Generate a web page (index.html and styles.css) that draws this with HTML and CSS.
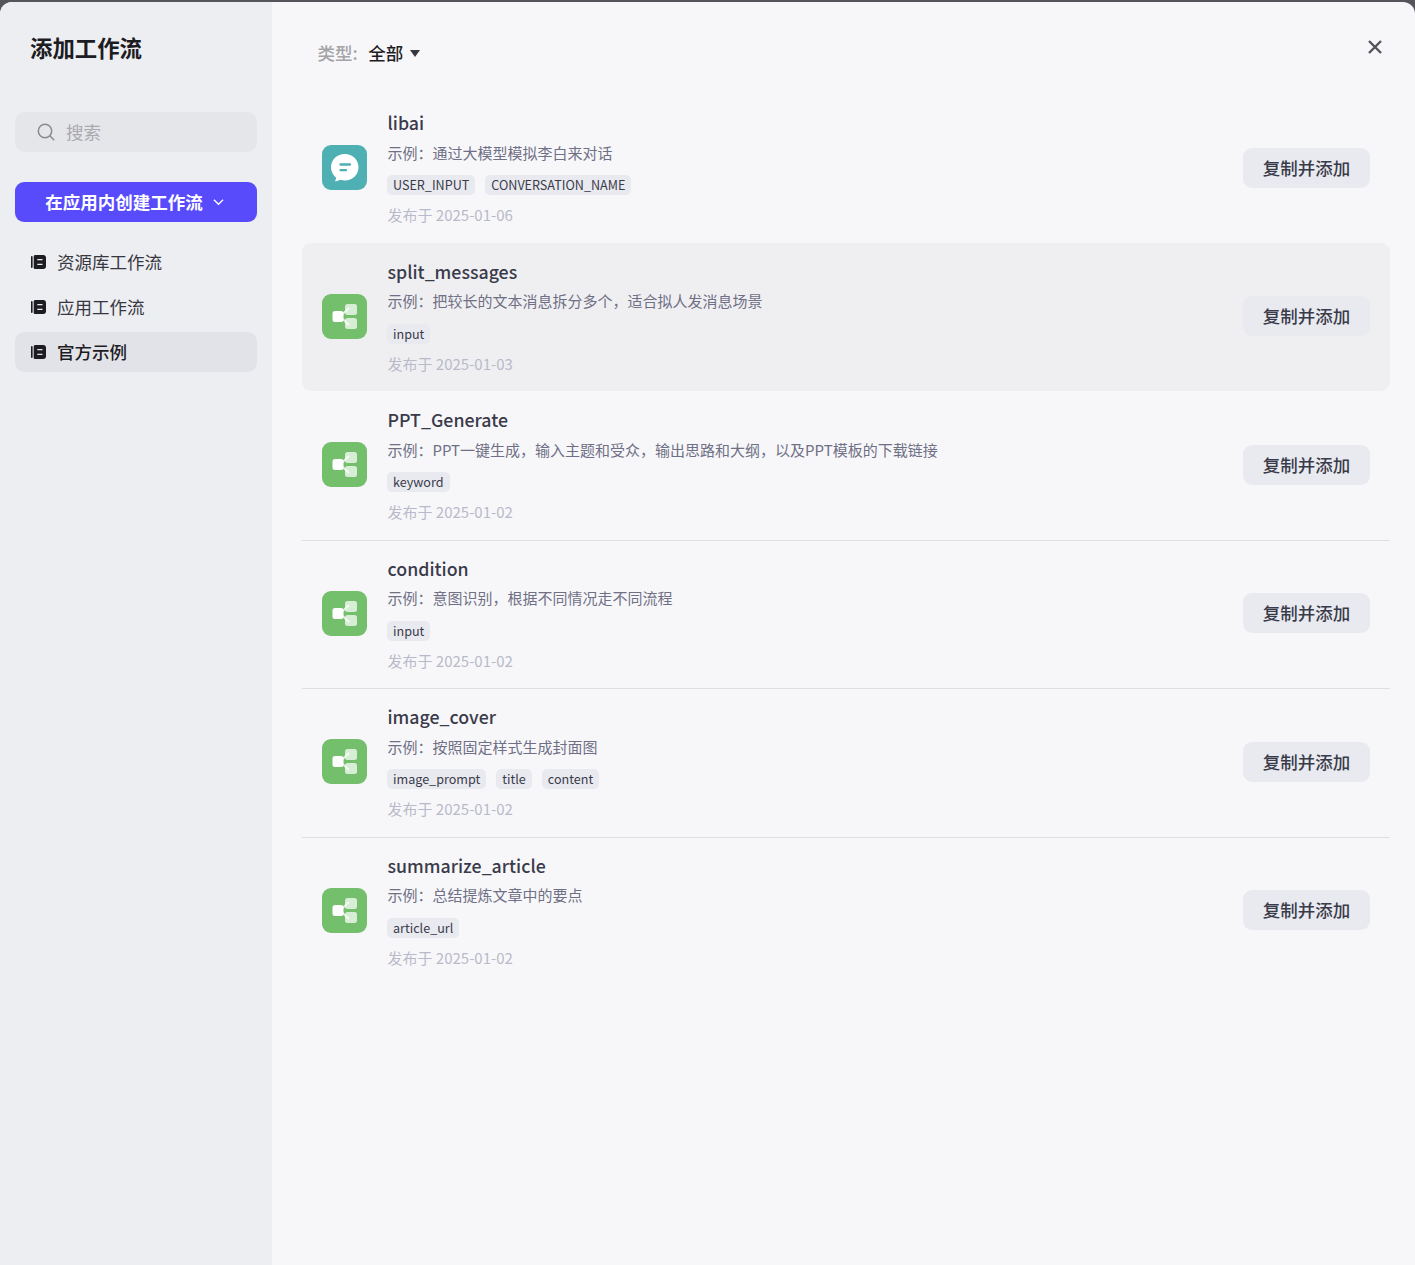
FILE: index.html
```html
<!DOCTYPE html>
<html lang="zh-CN">
<head>
<meta charset="utf-8">
<title>添加工作流</title>
<link rel="stylesheet" href="styles.css">
</head>
<body>
<svg class="defs" width="0" height="0" aria-hidden="true">
  <symbol id="book" viewBox="0 0 16 16">
    <path fill="currentColor" d="M1 2.800c0-.5.4-.8.8-.8s.8.3.8.8v10.400c0 .5-.4.8-.8.8s-.8-.3-.8-.8z"/>
    <path fill="currentColor" fill-rule="evenodd" d="M5.400 1h8C14.900 1 16 2.100 16 3.500v9c0 1.400-1.100 2.500-2.600 2.500h-8C4.400 15 3.700 14.300 3.700 13.400V2.600C3.700 1.700 4.400 1 5.400 1zM7.300 4.900v1.300h5.200V4.900zm0 4.900v1.300h5.200V9.800z"/>
  </symbol>
  <symbol id="flow" viewBox="0 0 45 45">
    <rect width="45" height="45" rx="9" fill="#74bf6c"/>
    <path d="M18 22.500 L27 14 M18 22.500 L27 31" stroke="#fff" stroke-opacity=".75" stroke-width="2" fill="none"/>
    <rect x="23" y="10" width="12" height="11" rx="2.500" fill="#fff" fill-opacity=".72"/>
    <rect x="23" y="24" width="12" height="11" rx="2.500" fill="#fff" fill-opacity=".72"/>
    <rect x="10.500" y="17" width="11" height="11" rx="2.500" fill="#fff"/>
  </symbol>
  <symbol id="chat" viewBox="0 0 45 45">
    <rect width="45" height="45" rx="9" fill="#4fb0b3"/>
    <path fill="#fff" d="M22.800 9C30.500 9 36.500 14.800 36.500 22.200S30.500 35.500 22.800 35.500c-1.500 0-3-.2-4.400-.7-1.500.9-3.500 1.500-5.600 1.500.8-1 1.300-2.300 1.300-3.500C11.300 30.400 9 26.600 9 22.200 9 14.800 15.100 9 22.800 9z"/>
    <path stroke="#4fb0b3" stroke-width="2.300" stroke-linecap="round" d="M18.500 19.500h9.500M18.500 25.200h5.500"/>
  </symbol>
</svg>
<div class="modal">
  <aside class="sidebar">
    <h1 class="side-title">添加工作流</h1>
    <div class="search">
      <svg class="search-icon" viewBox="0 0 18 18" width="18" height="18"><circle cx="8" cy="8" r="6.700" fill="none" stroke="currentColor" stroke-width="1.500"/><path d="M13 13l3.800 3.800" stroke="currentColor" stroke-width="1.500" stroke-linecap="round"/></svg>
      <span class="lift">搜索</span>
    </div>
    <button class="create-btn">在应用内创建工作流
      <svg class="chev" viewBox="0 0 12 8" width="11" height="8"><path d="M1 1.500l5 5 5-5" fill="none" stroke="currentColor" stroke-width="1.400"/></svg>
    </button>
    <nav class="nav">
      <a class="nav-item"><svg class="book"><use href="#book"/></svg><span class="lift">资源库工作流</span></a>
      <a class="nav-item"><svg class="book"><use href="#book"/></svg><span class="lift">应用工作流</span></a>
      <a class="nav-item active"><svg class="book"><use href="#book"/></svg><span class="lift">官方示例</span></a>
    </nav>
  </aside>
  <main class="main">
    <header class="filter">
      <span class="filter-label">类型:</span>
      <span class="filter-value">全部</span>
      <svg class="caret" viewBox="0 0 10 7" width="10" height="7"><path d="M0 0h10L5 7z" fill="currentColor"/></svg>
      <svg class="close" viewBox="0 0 14 14" width="14" height="14"><path d="M1 1l12 12M13 1L1 13" stroke="currentColor" stroke-width="2.400"/></svg>
    </header>
    <section class="list">
      <article class="row">
        <svg class="app-icon"><use href="#chat"/></svg>
        <div class="info">
          <div class="name">libai</div>
          <div class="desc">示例：通过大模型模拟李白来对话</div>
          <div class="tags"><span class="tag">USER_INPUT</span><span class="tag">CONVERSATION_NAME</span></div>
          <div class="date">发布于 2025-01-06</div>
        </div>
        <button class="add-btn">复制并添加</button>
      </article>
      <article class="row hover">
        <svg class="app-icon"><use href="#flow"/></svg>
        <div class="info">
          <div class="name">split_messages</div>
          <div class="desc">示例：把较长的文本消息拆分多个，适合拟人发消息场景</div>
          <div class="tags"><span class="tag">input</span></div>
          <div class="date">发布于 2025-01-03</div>
        </div>
        <button class="add-btn">复制并添加</button>
      </article>
      <article class="row line">
        <svg class="app-icon"><use href="#flow"/></svg>
        <div class="info">
          <div class="name">PPT_Generate</div>
          <div class="desc">示例：PPT一键生成，输入主题和受众，输出思路和大纲，以及PPT模板的下载链接</div>
          <div class="tags"><span class="tag">keyword</span></div>
          <div class="date">发布于 2025-01-02</div>
        </div>
        <button class="add-btn">复制并添加</button>
      </article>
      <article class="row line">
        <svg class="app-icon"><use href="#flow"/></svg>
        <div class="info">
          <div class="name">condition</div>
          <div class="desc">示例：意图识别，根据不同情况走不同流程</div>
          <div class="tags"><span class="tag">input</span></div>
          <div class="date">发布于 2025-01-02</div>
        </div>
        <button class="add-btn">复制并添加</button>
      </article>
      <article class="row line">
        <svg class="app-icon"><use href="#flow"/></svg>
        <div class="info">
          <div class="name">image_cover</div>
          <div class="desc">示例：按照固定样式生成封面图</div>
          <div class="tags"><span class="tag">image_prompt</span><span class="tag">title</span><span class="tag">content</span></div>
          <div class="date">发布于 2025-01-02</div>
        </div>
        <button class="add-btn">复制并添加</button>
      </article>
      <article class="row">
        <svg class="app-icon"><use href="#flow"/></svg>
        <div class="info">
          <div class="name">summarize_article</div>
          <div class="desc">示例：总结提炼文章中的要点</div>
          <div class="tags"><span class="tag">article_url</span></div>
          <div class="date">发布于 2025-01-02</div>
        </div>
        <button class="add-btn">复制并添加</button>
      </article>
    </section>
  </main>
</div>
</body>
</html>
```
FILE: styles.css
```css
* { box-sizing: border-box; }
html, body { height: 100%; }
body {
  margin: 0;
  background: #54545a;
  padding-top: 2px;
  overflow: hidden;
  font-family: "Noto Sans CJK SC", "Noto Sans", sans-serif;
  color: #1d1c23;
}
.defs { position: absolute; }
.lift { padding-bottom: 2px; }
.modal {
  display: flex;
  height: 1263px;
  border-radius: 12px 12px 0 0;
  overflow: hidden;
  background: #f7f7fa;
}
.sidebar {
  width: 272px;
  flex: none;
  background: #eceef2;
  padding: 0 15px;
}
.side-title {
  margin: 0;
  padding: 29px 0 0 15px;
  height: 110px;
  font-size: 22.400px;
  line-height: 32px;
  font-weight: 600;
  color: #1d1c23;
}
.search {
  display: flex;
  align-items: center;
  gap: 11px;
  height: 40px;
  padding-left: 22px;
  background: #e5e6ea;
  border-radius: 10px;
  font-size: 17.500px;
  color: #a9a9ae;
}
.search-icon { color: #8a8a90; }
.create-btn {
  display: flex;
  align-items: center;
  justify-content: center;
  gap: 10px;
  width: 100%;
  height: 40px;
  margin-top: 30px;
  padding: 0 3px 0 0;
  border: 0;
  border-radius: 9px;
  background: #574bfb;
  color: #fff;
  font: 600 17.500px/24px "Noto Sans CJK SC", sans-serif;
}
.nav { margin-top: 20px; display: flex; flex-direction: column; gap: 5px; }
.nav-item {
  display: flex;
  align-items: center;
  gap: 11px;
  height: 40px;
  padding-left: 15px;
  border-radius: 9px;
  font-size: 17.500px;
  color: #38373f;
}
.nav-item.active { background: #e2e3e8; font-weight: 500; color: #1d1c23; }
.book { width: 16px; height: 16px; flex: none; color: #1d1c23; }
.main { flex: 1; min-width: 0; padding: 0 25px 0 30px; }
.filter {
  display: flex;
  align-items: center;
  height: 92.500px;
  padding: 9px 0 0 15.500px;
  position: relative;
  font-size: 17.500px;
}
.filter-label { color: #a3a3a8; font-weight: 500; }
.filter-value { margin-left: 10.500px; color: #1d1c23; font-weight: 500; }
.caret { margin-left: 7px; margin-top: 1px; color: #38373f; }
.close { position: absolute; right: 8px; top: 38px; color: #54545c; }
.row {
  display: flex;
  align-items: center;
  height: 148.500px;
  padding: 0 20px 2px;
  border-radius: 9px;
}
.row.hover { background: #efeff2; height: 148px; margin-bottom: 0.500px; }
.row.line { position: relative; }
.row.line::after {
  content: "";
  position: absolute;
  left: 0;
  right: 0;
  bottom: -0.500px;
  height: 1px;
  background: #dedfe4;
}
.app-icon { width: 45px; height: 45px; flex: none; }
.info { flex: 1; min-width: 0; margin: 1px 0 0 20.500px; display: flex; flex-direction: column; }
.name { font-size: 17.750px; line-height: 24px; padding-bottom: 2px; font-weight: 500; color: #3a3b4a; }
.desc { font-size: 15px; line-height: 22px; margin-top: 5.500px; color: #6f7085; }
.tags { display: flex; gap: 10px; margin: 11.500px 0 0 -0.500px; }
.tag {
  height: 20px;
  padding: 0 6px;
  border-radius: 5px;
  background: #e9eaf0;
  font-size: 12.600px;
  line-height: 20px;
  color: #3a3b4a;
}
.date { font-size: 15px; line-height: 22px; margin-top: 9px; color: #b9bac9; }
.add-btn {
  flex: none;
  width: 127px;
  height: 40px;
  border: 0;
  border-radius: 9px;
  background: #e9eaf0;
  color: #3a3b4a;
  font: 500 17.500px/24px "Noto Sans CJK SC", sans-serif;
}
```
